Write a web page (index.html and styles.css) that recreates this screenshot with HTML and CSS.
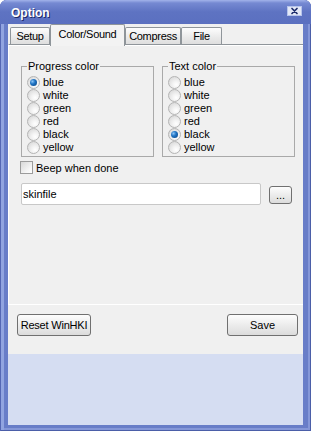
FILE: index.html
```html
<!DOCTYPE html>
<html lang="en">
<head>
    <meta charset="UTF-8">
    <title>Option</title>
    <link rel="stylesheet" href="styles.css">
</head>
<body>
    <div class="window">
        <div class="titlebar">
            <span class="title">Option</span>
            <button class="close" aria-label="Close">
                <svg width="15" height="10" viewBox="0 0 15 10">
                    <rect x="0.5" y="0.5" width="14" height="9" fill="#e3e8f6" stroke="#b6c4ec"></rect>
                    <path d="M5 2.5 L10 7.5 M10 2.5 L5 7.5" stroke="#1d2c6c" stroke-width="1.7" stroke-linecap="round"></path>
                </svg>
            </button>
        </div>

        <div class="frame">
            <div class="tabs">
                <div class="tab tab-setup">Setup</div>
                <div class="tab tab-color active">Color/Sound</div>
                <div class="tab tab-compress">Compress</div>
                <div class="tab tab-file">File</div>
            </div>

            <div class="panel">
                <div class="groups">
                    <fieldset class="group">
                        <legend>Progress color</legend>
                        <label class="option"><input type="radio" name="progress" checked> blue</label>
                        <label class="option"><input type="radio" name="progress"> white</label>
                        <label class="option"><input type="radio" name="progress"> green</label>
                        <label class="option"><input type="radio" name="progress"> red</label>
                        <label class="option"><input type="radio" name="progress"> black</label>
                        <label class="option"><input type="radio" name="progress"> yellow</label>
                    </fieldset>
                    <fieldset class="group">
                        <legend>Text color</legend>
                        <label class="option"><input type="radio" name="text"> blue</label>
                        <label class="option"><input type="radio" name="text"> white</label>
                        <label class="option"><input type="radio" name="text"> green</label>
                        <label class="option"><input type="radio" name="text"> red</label>
                        <label class="option"><input type="radio" name="text" checked> black</label>
                        <label class="option"><input type="radio" name="text"> yellow</label>
                    </fieldset>
                </div>

                <label class="beep"><input type="checkbox"> Beep when done</label>

                <div class="skin-row">
                    <input type="text" class="skin" value="skinfile">
                    <button class="btn browse">...</button>
                </div>
            </div>

            <div class="actions">
                <button class="btn btn-reset">Reset WinHKI</button>
                <button class="btn btn-save">Save</button>
            </div>

            <div class="footer"></div>
        </div>
    </div>
</body>
</html>
```

FILE: styles.css
```css
* {
    box-sizing: border-box;
}
html, body {
    margin: 0;
    padding: 0;
    background: #fff;
}
body {
    font-family: "Liberation Sans", Arial, sans-serif;
    font-size: 11px;
    color: #000;
}

/* window frame */
.window {
    width: 311px;
    height: 431px;
    padding: 0 8px 6px;
    background: #687dc8;
    border-radius: 7px 7px 0 0;
    box-shadow:
        inset 1px 0 0 #5467b4,
        inset -1px 0 0 #4b5ea8,
        inset 0 -1px 0 #4b5ea8,
        inset 4px 0 0 #91a4e0,
        inset -3px 0 0 #8597d8,
        inset 0 -3px 0 #8597d8;
}
.titlebar {
    height: 24px;
    margin: 0 -8px;
    padding: 1px 9px 0 11px;
    display: flex;
    align-items: center;
    justify-content: space-between;
    background: linear-gradient(#a2b3ea 0, #7589d2 3px, #5e73c2 12px, #5b70c0 100%);
    border-radius: 7px 7px 0 0;
}
.title {
    color: #fff;
    font-weight: bold;
    font-size: 12px;
    text-shadow: 1px 1px 0 #1d2a66;
}
.close {
    width: 15px;
    height: 10px;
    padding: 0;
    border: 0;
    background: none;
    margin-top: -3px;
}
.close svg {
    display: block;
}

.frame {
    height: 401px;
    background: #f0f0f0;
}

/* tabs */
.tabs {
    height: 20px;
    padding-left: 2px;
    display: flex;
    align-items: flex-end;
    position: relative;
    z-index: 1;
}
.tab {
    height: 17px;
    line-height: 16px;
    text-align: center;
    letter-spacing: -0.3px;
    white-space: nowrap;
    border: 1px solid #8f959a;
    border-bottom: 0;
    border-radius: 2px 2px 0 0;
    background: linear-gradient(#fdfdfd, #e9e9e9 60%, #dedede);
}
.tab-setup { width: 40px; }
.tab-color { width: 75px; }
.tab-compress { width: 56px; }
.tab-file { width: 41px; }
.tab.active {
    height: 22px;
    line-height: 19px;
    padding-bottom: 2px;
    margin-bottom: -2px;
    background: #f3f3f3;
}

.panel {
    height: 261px;
    padding: 15px 8px 0 12px;
    background: #f0f0f0;
    border-top: 1px solid #8f959a;
    border-left: 1px solid #fff;
    border-bottom: 1px solid #fff;
    box-shadow: inset 0 1px 0 #fff;
}

/* group boxes */
.groups {
    display: grid;
    grid-template-columns: 133px 133px;
    gap: 8px;
}
.group {
    margin: 0;
    min-width: 0;
    padding: 3px 4px 2px 5px;
    border: 1px solid #a9a9a9;
}
.group legend {
    padding: 0 1px;
    line-height: 13px;
}
.option {
    display: flex;
    align-items: center;
    gap: 3px;
    height: 13px;
    line-height: 13px;
}
.option input {
    appearance: none;
    -webkit-appearance: none;
    width: 13px;
    height: 13px;
    margin: 0;
    border: 1px solid #b4b4b4;
    border-radius: 50%;
    background: radial-gradient(circle at 65% 70%, #fff 0, #f4f4f4 30%, #d2d2d2 100%);
    position: relative;
}
.option input:checked::after {
    content: "";
    position: absolute;
    left: 2px;
    top: 2px;
    width: 7px;
    height: 7px;
    border-radius: 50%;
    background: radial-gradient(circle at 35% 35%, #8cc4f5 0, #1f74c4 40%, #0a3f7c 100%);
}

/* beep checkbox */
.beep {
    display: flex;
    align-items: center;
    gap: 3px;
    height: 13px;
    margin: 4px 0 0 -1px;
}
.beep input {
    appearance: none;
    -webkit-appearance: none;
    width: 13px;
    height: 13px;
    margin: 0;
    border: 1px solid #9c9c9c;
    background: linear-gradient(135deg, #d8d8d8, #f6f6f6 70%, #fff);
}

/* skin file */
.skin-row {
    display: flex;
    align-items: flex-start;
    margin-top: 9px;
}
.skin {
    width: 240px;
    height: 22px;
    padding: 0 0 0 1px;
    border: 1px solid #c8c8c8;
    border-radius: 2px;
    background: #fff;
    font-family: inherit;
    font-size: 11px;
    outline: none;
}

.btn {
    padding: 0;
    font-family: inherit;
    font-size: 11px;
    color: #000;
    border: 1px solid #707070;
    border-radius: 3px;
    background: linear-gradient(#fdfdfd, #ececec 50%, #dcdcdc);
}
.browse {
    width: 23px;
    height: 18px;
    margin: 3px 0 0 8px;
    line-height: 12px;
}

/* bottom buttons */
.actions {
    height: 49px;
    padding: 9px 5px 0 9px;
    display: flex;
    justify-content: space-between;
    align-items: flex-start;
}
.btn-reset {
    width: 74px;
    height: 22px;
    letter-spacing: -0.2px;
}
.btn-save {
    width: 71px;
    height: 22px;
}

.footer {
    height: 71px;
    background: #d5ddf2;
}
```
